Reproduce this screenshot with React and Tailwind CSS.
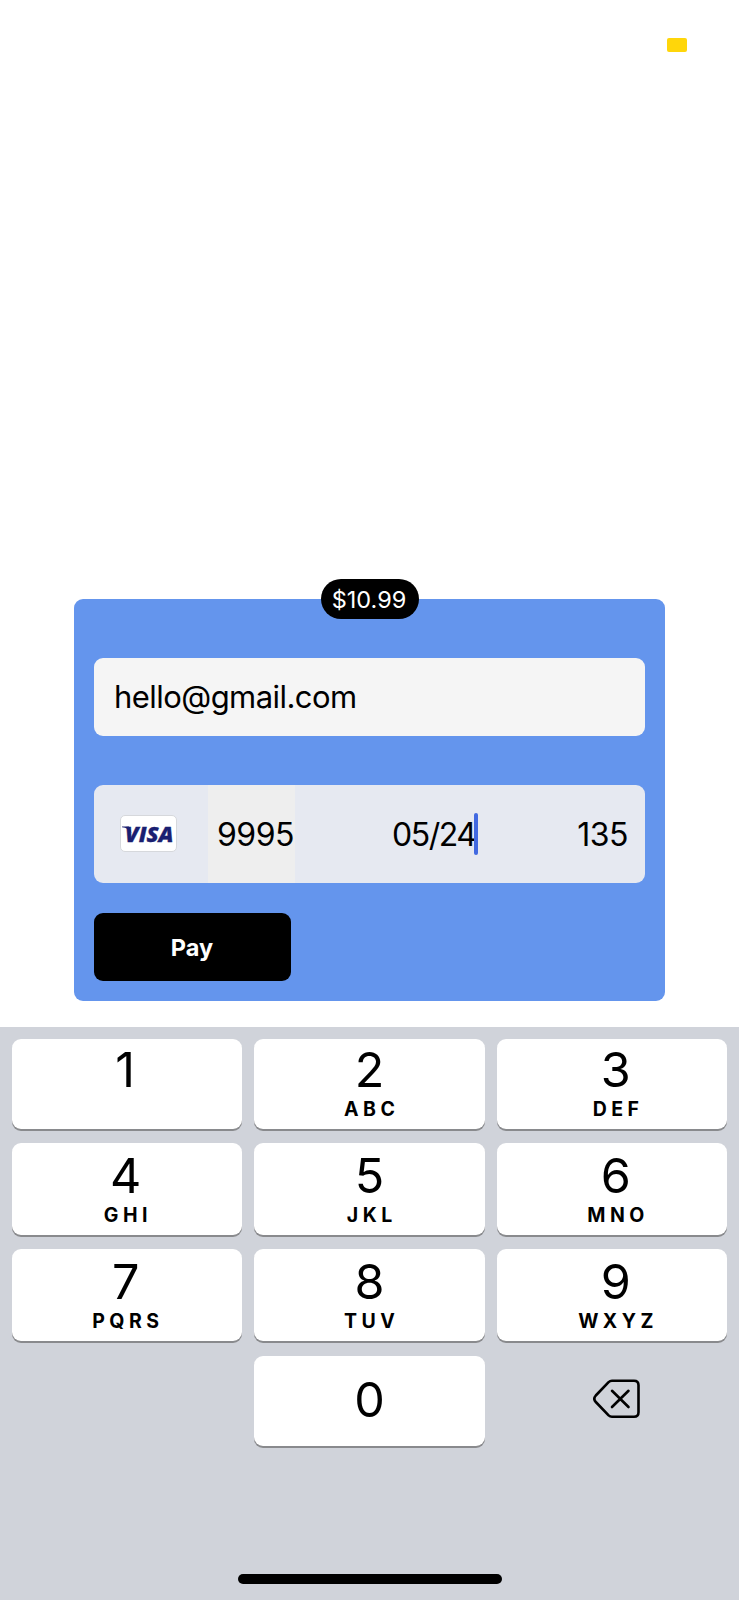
const ROWS = [
  {
    top: 'pt-[12px]',
    height: 'h-[90px]',
    pad: 'pt-[2px]',
    keys: [['1', '', '-ml-[4px]'], ['2', 'ABC', ''], ['3', 'DEF', 'ml-[8px]']],
  },
  {
    top: 'pt-[14px]',
    height: 'h-[92px]',
    pad: 'pt-[4px]',
    keys: [['4', 'GHI', '-ml-[3px]'], ['5', 'JKL', ''], ['6', 'MNO', 'ml-[8px]']],
  },
  {
    top: 'pt-[14px]',
    height: 'h-[92px]',
    pad: 'pt-[4px]',
    keys: [['7', 'PQRS', '-ml-[3px]'], ['8', 'TUV', ''], ['9', 'WXYZ', 'ml-[8px]']],
  },
];

function VisaCard() {
  return (
    <div className="mb-px ml-[26px] flex h-[37px] w-[57px] items-center justify-center rounded-[5px] border border-[#d6d8dc] bg-white">
      <svg width="53" height="30" viewBox="0 0 53 30" className="overflow-visible">
        <path d="M0 7.6 H7 L9.5 14 C7 10.5 4.5 8.8 0 8.3 Z" fill="#1a1f71" />
        <text
          x="3"
          y="22.5"
          textLength="48.5"
          lengthAdjust="spacingAndGlyphs"
          fontFamily="Open Sans, sans-serif"
          fontWeight="800"
          fontStyle="italic"
          fontSize="21"
          fill="#1a1f71"
          stroke="#1a1f71"
          strokeWidth="0.3"
        >
          VISA
        </text>
      </svg>
    </div>
  );
}

function Key({ digit, letters, height, pad, shift }) {
  return (
    <button
      className={`flex flex-col items-center rounded-[9px] bg-white shadow-[0_2px_0_#898a8d] ${height} ${pad}`}
    >
      <span className={`flex flex-col items-center ${shift}`}>
        <span className="text-[48.5px] leading-[58px]">{digit}</span>
        {letters && (
          <span className="mr-[-4.5px] text-[19.5px] leading-[20px] font-bold tracking-[4.5px]">{letters}</span>
        )}
      </span>
    </button>
  );
}

function Backspace() {
  return (
    <svg width="48" height="40" viewBox="0 0 48 40" fill="none" stroke="#000" strokeWidth="2.6" strokeLinecap="round" strokeLinejoin="round">
      <path d="M19 1.8 H41 Q45.5 1.8 45.5 6.3 V33.2 Q45.5 37.7 41 37.7 H19 Q17 37.7 15.6 36.4 L2.8 23 Q-0.2 19.8 2.8 16.5 L15.6 3.1 Q17 1.8 19 1.8 Z" />
      <path d="M19 11.8 L35.5 28 M35.5 11.8 L19 28" />
    </svg>
  );
}

export default function App() {
  return (
    <div className="flex h-[1600px] w-[739px] flex-col overflow-hidden bg-white font-['Inter',sans-serif] text-black">
      <div className="flex h-[599px] shrink-0 items-start justify-end pt-[38px] pr-[52px]">
        <span className="h-[14px] w-[20px] rounded-[2px] bg-[#ffd60a]" />
      </div>

      <div className="relative ml-[74px] flex h-[402px] w-[591px] shrink-0 flex-col rounded-[9px] bg-[#6495ed] px-[20px] pt-[59px]">
        <span className="absolute -top-[20px] left-[246.5px] flex h-[40px] w-[98px] items-center justify-center rounded-full bg-black pt-px pr-px text-[23.5px] text-white">
          $10.99
        </span>
        <div className="flex h-[78px] items-center rounded-[9px] bg-[#f5f5f5] pl-[20px] text-[31px] tracking-[-0.55px]">
          hello@gmail.com
        </div>
        <div className="mt-[49px] flex h-[98px] items-center rounded-[9px] bg-[#e6e9f1] text-[32px]">
          <VisaCard />
          <span className="ml-[31px] flex h-full w-[87px] items-center justify-end bg-[#eeeeee] pt-[2px] pr-px tracking-[-0.5px]">
            9995
          </span>
          <span className="ml-[97px] w-[84px] pt-[2px] tracking-[-1.5px] whitespace-nowrap">05/24</span>
          <span className="-ml-[2px] h-[42px] w-[4px] rounded-full bg-[#4169e1]" />
          <span className="mr-[17px] ml-auto pt-[2px] tracking-[-0.5px]">135</span>
        </div>
        <button className="mt-[30px] flex h-[68px] w-[197px] items-center justify-center rounded-[9px] bg-black pt-px pr-px text-[23.5px] font-bold text-white">
          Pay
        </button>
      </div>

      <div className="mt-[26px] flex flex-1 flex-col bg-[#d0d3da] px-[12px]">
        {ROWS.map((row) => (
          <div key={row.keys[0][0]} className={`grid grid-cols-3 gap-[12px] ${row.top}`}>
            {row.keys.map(([digit, letters, shift]) => (
              <Key key={digit} digit={digit} letters={letters} height={row.height} pad={row.pad} shift={shift} />
            ))}
          </div>
        ))}
        <div className="grid grid-cols-3 gap-[12px] pt-[15px]">
          <span />
          <Key digit="0" height="h-[90px]" pad="pt-[15px]" shift="" />
          <span className="flex items-center justify-center pb-[4px] pl-[10px]">
            <Backspace />
          </span>
        </div>
        <div className="mt-auto mb-[16px] flex justify-center">
          <span className="h-[10px] w-[264px] rounded-full bg-black" />
        </div>
      </div>
    </div>
  );
}
